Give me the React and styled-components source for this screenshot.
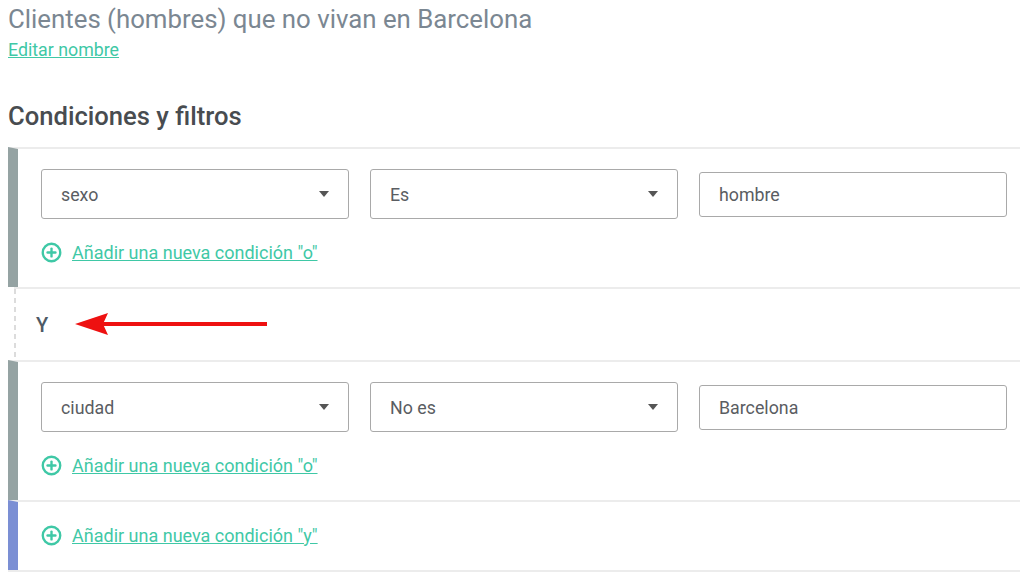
import React from "react";
import styled, { createGlobalStyle } from "styled-components";

const Global = createGlobalStyle`
  html, body { margin: 0; padding: 0; background: #fff; }
  body { font-family: Roboto, "Noto Sans", Arial, sans-serif; }
`;

const Page = styled.div`
  width: 1024px;
  height: 583px;
  overflow: hidden;
  padding: 4px 4px 0 8px;
  box-sizing: border-box;
`;

const Title = styled.h1`
  margin: 0;
  font-size: 25.8px;
  font-weight: 400;
  color: #7b8792;
  line-height: 30px;
`;

const EditLink = styled.a`
  display: inline-block;
  margin-top: 5px;
  font-size: 17.8px;
  color: #3fc8a6;
  text-decoration: underline;
  line-height: 22px;
  cursor: pointer;
`;

const Heading = styled.h2`
  margin: 39px 0 0;
  font-size: 25.6px;
  font-weight: 500;
  color: #484c50;
  line-height: 32px;
`;

const List = styled.div`
  margin-top: 15px;
  display: flex;
  flex-direction: column;
`;

const Block = styled.div`
  display: flex;
  flex-direction: column;
  gap: ${(p) => p.$gap || 0}px;
  padding: ${(p) => p.$pad};
  border-top: 2px solid #ececec;
  border-left: 10px solid ${(p) => p.$bar};
`;

const LastBorder = styled.div`
  border-top: 2px solid #ececec;
`;

const Row = styled.div`
  display: flex;
  align-items: center;
  gap: 21px;
  padding-left: 23px;
  padding-right: 13px;
`;

const SelectBox = styled.div`
  width: 308px;
  height: 50px;
  box-sizing: border-box;
  border: 1.5px solid #a9a9a9;
  border-radius: 3px;
  display: flex;
  align-items: center;
  justify-content: space-between;
  padding: 0 19px 0 19px;
  font-size: 17.8px;
  color: #5a5d62;
`;

const Caret = styled.span`
  width: 0;
  height: 0;
  border-left: 5.5px solid transparent;
  border-right: 5.5px solid transparent;
  border-top: 6px solid #555;
`;

const InputBox = styled.div`
  width: 308px;
  height: 45px;
  box-sizing: border-box;
  border: 1.5px solid #a9a9a9;
  border-radius: 3px;
  display: flex;
  align-items: center;
  padding: 0 19px;
  font-size: 17.8px;
  color: #5a5d62;
`;

const AddRow = styled.div`
  display: flex;
  align-items: center;
  gap: 10px;
  padding-left: 23px;
`;

const AddLink = styled.a`
  font-size: 18px;
  color: #3fc8a6;
  text-decoration: underline;
  cursor: pointer;
  line-height: 20px;
`;

const AndRow = styled.div`
  height: 73px;
  box-sizing: border-box;
  padding-bottom: 2px;
  display: flex;
  align-items: center;
  gap: 27px;
  border-top: 2px solid #ececec;
  margin-left: 6px;
  padding-left: 22px;
  background-image: linear-gradient(#dcdcdc 55%, transparent 55%);
  background-size: 2px 9px;
  background-repeat: repeat-y;
  background-position: 0 0;
`;

const AndLabel = styled.span`
  font-size: 20px;
  font-weight: 500;
  color: #4e5a66;
  padding-top: 2px;
`;

const PlusIcon = () => (
  <svg width="21" height="21" viewBox="0 0 24 24" fill="none" stroke="#3fc8a6" strokeWidth="2.7" strokeLinecap="round">
    <circle cx="12" cy="12" r="10" />
    <line x1="12" y1="7.5" x2="12" y2="16.5" />
    <line x1="7.5" y1="12" x2="16.5" y2="12" />
  </svg>
);

const Arrow = () => (
  <svg width="192" height="26" viewBox="0 0 192 26">
    <polygon points="0,13 33,2 28,13 33,24" fill="#ee1111" />
    <rect x="26" y="11" width="166" height="4" fill="#ee1111" />
  </svg>
);

const Select = ({ value }) => (
  <SelectBox>
    <span>{value}</span>
    <Caret />
  </SelectBox>
);

const Add = ({ label }) => (
  <AddRow>
    <PlusIcon />
    <AddLink>{label}</AddLink>
  </AddRow>
);

export default function App() {
  return (
    <>
      <Global />
      <Page>
        <Title>Clientes (hombres) que no vivan en Barcelona</Title>
        <EditLink>Editar nombre</EditLink>
        <Heading>Condiciones y filtros</Heading>
        <List>
          <Block $bar="#95a3a3" $pad="20px 0 24px" $gap={23}>
            <Row>
              <Select value="sexo" />
              <Select value="Es" />
              <InputBox>hombre</InputBox>
            </Row>
            <Add label={'Añadir una nueva condición "o"'} />
          </Block>
          <AndRow>
            <AndLabel>Y</AndLabel>
            <Arrow />
          </AndRow>
          <Block $bar="#95a3a3" $pad="20px 0 24px" $gap={23}>
            <Row>
              <Select value="ciudad" />
              <Select value="No es" />
              <InputBox>Barcelona</InputBox>
            </Row>
            <Add label={'Añadir una nueva condición "o"'} />
          </Block>
          <Block $bar="#7b8fd4" $pad="23px 0 24px">
            <Add label={'Añadir una nueva condición "y"'} />
          </Block>
          <LastBorder />
        </List>
      </Page>
    </>
  );
}
